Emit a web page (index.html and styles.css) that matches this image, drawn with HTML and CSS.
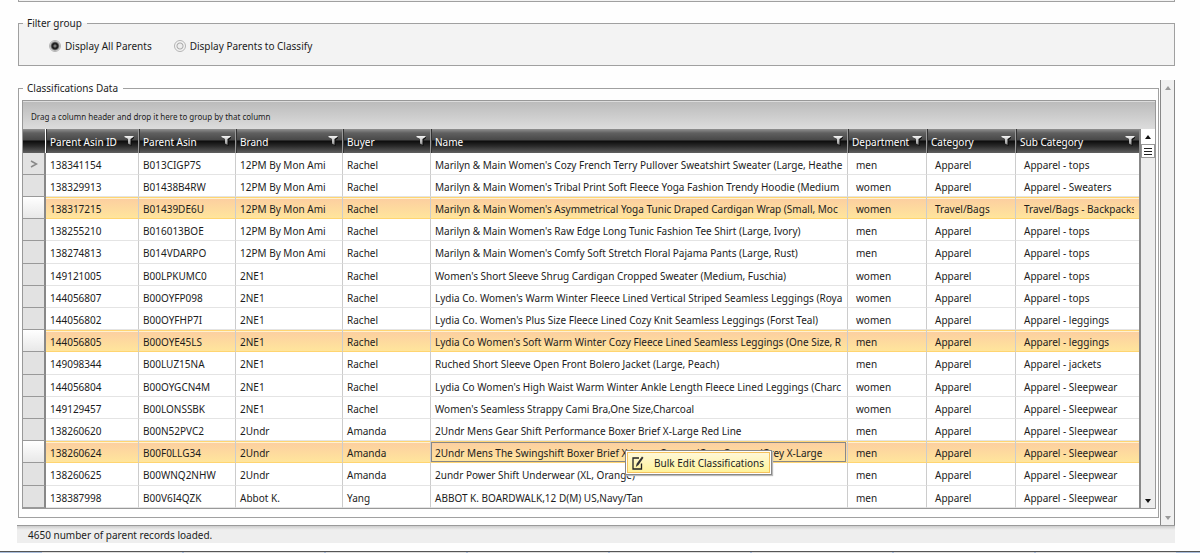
FILE: index.html
```
<!DOCTYPE html>
<html lang="en">
<head>
<meta charset="utf-8">
<title>Classifications</title>
<link rel="stylesheet" href="styles.css">
</head>
<body>
<svg class="defs" aria-hidden="true">
  <defs>
    <linearGradient id="funnel-fill" x1="0" y1="0" x2="0" y2="1">
      <stop offset="0" stop-color="#f4f4f4"/>
      <stop offset="1" stop-color="#909090"/>
    </linearGradient>
    <symbol id="funnel" viewBox="0 0 10 11">
      <path d="M2 2h8v1L7.500 5v6L5 9.500V5L2 3z" fill="#0a0a0a"/>
      <path d="M.5 1h9v1L6.500 4v6L4 8.500V4L.5 2z" fill="url(#funnel-fill)"/>
    </symbol>
  </defs>
</svg>
<div class="page">
  <div class="previous-group"></div>
  <fieldset class="group filter-group">
    <legend>Filter group</legend>
    <div class="options">
      <label class="option"><input type="radio" name="display" checked>Display All Parents</label>
      <label class="option"><input type="radio" name="display">Display Parents to Classify</label>
    </div>
  </fieldset>
  <main class="workspace">
    <fieldset class="group data-group">
      <legend>Classifications Data</legend>
      <div class="grid">
        <div class="group-bar">Drag a column header and drop it here to group by that column</div>
        <div class="grid-body">
          <table class="records">
            <colgroup>
              <col class="c-handle"><col class="c-id"><col class="c-asin"><col class="c-brand"><col class="c-buyer"><col><col class="c-dept"><col class="c-cat"><col class="c-sub">
            </colgroup>
            <thead>
              <tr id="head"></tr>
            </thead>
            <tbody id="rows"></tbody>
          </table>
          <div class="scroll inner-scroll">
            <button class="arrow up" type="button" aria-label="Scroll up"></button>
            <div class="thumb"></div>
            <button class="arrow down" type="button" aria-label="Scroll down"></button>
          </div>
        </div>
        <div class="menu" role="menu">
          <button class="menu-item" type="button" role="menuitem">
            <svg class="edit-icon" viewBox="0 0 12 14" aria-hidden="true">
              <path d="M7 2H1v11h8.500V7.500" fill="none" stroke="#222" stroke-width="1.300"/>
              <path d="M10 .5l1.500 1.200-5 7.300-2.700 2 .8-3.200z" fill="#333"/>
            </svg>
            <span>Bulk Edit Classifications</span>
          </button>
        </div>
      </div>
    </fieldset>
    <div class="scroll outer-scroll">
      <button class="arrow up" type="button" aria-label="Scroll page up"></button>
      <button class="arrow down" type="button" aria-label="Scroll page down"></button>
    </div>
  </main>
  <footer class="status">4650 number of parent records loaded.</footer>
</div>
<div class="taskbar"><i></i><i></i><i></i><i></i><i></i><i></i><i></i><i></i></div>
<script src="grid.js"></script>
</body>
</html>
```
FILE: grid.js
```
const columns = ["Parent Asin ID", "Parent Asin", "Brand", "Buyer", "Name", "Department", "Category", "Sub Category"];
const records = [
  ["138341154", "B013CIGP7S", "12PM By Mon Ami", "Rachel", "Marilyn & Main Women's Cozy French Terry Pullover Sweatshirt Sweater (Large, Heathe", "men", "Apparel", "Apparel - tops"],
  ["138329913", "B01438B4RW", "12PM By Mon Ami", "Rachel", "Marilyn & Main Women's Tribal Print Soft Fleece Yoga Fashion Trendy Hoodie (Medium", "women", "Apparel", "Apparel - Sweaters"],
  ["138317215", "B01439DE6U", "12PM By Mon Ami", "Rachel", "Marilyn & Main Women's Asymmetrical Yoga Tunic Draped Cardigan Wrap (Small, Moc", "women", "Travel/Bags", "Travel/Bags - Backpacks"],
  ["138255210", "B016013BOE", "12PM By Mon Ami", "Rachel", "Marilyn & Main Women's Raw Edge Long Tunic Fashion Tee Shirt (Large, Ivory)", "men", "Apparel", "Apparel - tops"],
  ["138274813", "B014VDARPO", "12PM By Mon Ami", "Rachel", "Marilyn & Main Women's Comfy Soft Stretch Floral Pajama Pants (Large, Rust)", "men", "Apparel", "Apparel - tops"],
  ["149121005", "B00LPKUMC0", "2NE1", "Rachel", "Women's Short Sleeve Shrug Cardigan Cropped Sweater (Medium, Fuschia)", "women", "Apparel", "Apparel - tops"],
  ["144056807", "B00OYFP098", "2NE1", "Rachel", "Lydia Co. Women's Warm Winter Fleece Lined Vertical Striped Seamless Leggings (Roya", "women", "Apparel", "Apparel - tops"],
  ["144056802", "B00OYFHP7I", "2NE1", "Rachel", "Lydia Co. Women's Plus Size Fleece Lined Cozy Knit Seamless Leggings (Forst Teal)", "women", "Apparel", "Apparel - leggings"],
  ["144056805", "B00OYE45LS", "2NE1", "Rachel", "Lydia Co Women's Soft Warm Winter Cozy Fleece Lined Seamless Leggings (One Size, R", "men", "Apparel", "Apparel - leggings"],
  ["149098344", "B00LUZ15NA", "2NE1", "Rachel", "Ruched Short Sleeve Open Front Bolero Jacket (Large, Peach)", "men", "Apparel", "Apparel - jackets"],
  ["144056804", "B00OYGCN4M", "2NE1", "Rachel", "Lydia Co Women's High Waist Warm Winter Ankle Length Fleece Lined Leggings (Charc", "women", "Apparel", "Apparel - Sleepwear"],
  ["149129457", "B00LONSSBK", "2NE1", "Rachel", "Women's Seamless Strappy Cami Bra,One Size,Charcoal", "women", "Apparel", "Apparel - Sleepwear"],
  ["138260620", "B00N52PVC2", "2Undr", "Amanda", "2Undr Mens Gear Shift Performance Boxer Brief X-Large Red Line", "men", "Apparel", "Apparel - Sleepwear"],
  ["138260624", "B00F0LLG34", "2Undr", "Amanda", "2Undr Mens The Swingshift Boxer Brief X-Large Orange/Grey Orange/Grey X-Large", "men", "Apparel", "Apparel - Sleepwear"],
  ["138260625", "B00WNQ2NHW", "2Undr", "Amanda", "2undr Power Shift Underwear (XL, Orange)", "men", "Apparel", "Apparel - Sleepwear"],
  ["138387998", "B00V6I4QZK", "Abbot K.", "Yang", "ABBOT K. BOARDWALK,12 D(M) US,Navy/Tan", "men", "Apparel", "Apparel - Sleepwear"]
];
const selected = new Set(["138317215", "144056805", "138260624"]);
const focused = "138260624";

const head = document.getElementById("head");
const corner = document.createElement("th");
corner.className = "handle";
head.append(corner);
for (const title of columns) {
  const th = document.createElement("th");
  th.scope = "col";
  th.innerHTML = '<div class="heading"><span></span><button class="filter" type="button"><svg><use href="#funnel"/></svg></button></div>';
  th.querySelector("span").textContent = title;
  th.querySelector("button").setAttribute("aria-label", "Filter " + title);
  head.append(th);
}

const body = document.getElementById("rows");
records.forEach((record, index) => {
  const tr = document.createElement("tr");
  if (selected.has(record[0])) tr.className = "selected";
  const handle = document.createElement("td");
  handle.className = "handle";
  if (index === 0) handle.innerHTML = '<svg class="current" viewBox="0 0 8 8"><path d="M1 1l5.500 3L1 7" fill="none" stroke="#888" stroke-width="1.500"/></svg>';
  tr.append(handle);
  record.forEach((value, column) => {
    const td = document.createElement("td");
    const cell = document.createElement("div");
    cell.className = "cell";
    if (record[0] === focused && column === 4) td.className = "focused";
    cell.textContent = value;
    td.append(cell);
    tr.append(td);
  });
  body.append(tr);
});
```
FILE: styles.css
```
* { box-sizing: border-box; }
body {
  margin: 0;
  background: #fefefe;
  color: #1c1c1c;
  font: 10px/14px "Noto Sans", "Open Sans", sans-serif;
}
button {
  margin: 0;
  padding: 0;
  border: 0;
  background: none;
  color: inherit;
  font: inherit;
}
.defs { position: absolute; width: 0; height: 0; }
.page { padding: 0 25px 0 17px; }
.previous-group {
  height: 2px;
  margin: 0 0 14px 1px;
  border: 1px solid #a0a0a0;
  border-top: 0;
  background: #f3f3f3;
}
.group {
  min-width: 0;
  margin: 0;
  border: 1px solid #a0a0a0;
}
.group legend { margin-left: 1px; padding: 0 5px 0 4px; }
.filter-group {
  margin-left: 1px;
  padding: 9px 3px 12px;
  background: #f3f3f3;
}
.options { display: flex; gap: 22px; padding-left: 27px; }
.option { display: flex; align-items: center; gap: 4px; }
.option input {
  appearance: none;
  width: 12px;
  height: 12px;
  margin: 0;
  border: 1px solid #b4b4b4;
  border-radius: 50%;
  background: radial-gradient(circle, #eee 0 2px, #aaa 3px, #f4f4f4 4px);
}
.option input:checked { background: radial-gradient(circle, #777 0 1px, #222 2px 3px, #ddd 5px); }

.workspace { display: flex; }
.data-group { flex: 1; margin: 15px 0 7px 1px; padding: 5px 2px 8px 3px; }
.grid { position: relative; border: 1px solid #999; }
.group-bar {
  padding: 8px 8px 5px;
  border-top: 1px solid #ddd;
  background: linear-gradient(#bcbcbc, #dcdcdc);
  font-size: 8px;
}
.grid-body { display: flex; }
.records {
  flex: 1;
  width: 0;
  border-spacing: 0;
  table-layout: fixed;
}
.c-handle { width: 23px; }
.c-id { width: 92px; }
.c-asin { width: 97px; }
.c-brand { width: 107px; }
.c-buyer { width: 88px; }
.c-dept { width: 79px; }
.c-cat { width: 89px; }
.c-sub { width: 124px; }
.records th, .records td { padding: 0; text-align: left; font-weight: 400; }
.records th {
  height: 24px;
  border-left: 1px solid #999;
  background: linear-gradient(#909090, #606060 4px, #484848 11px, #0c0c0c 12px, #2a2a2a 17px, #606060 24px);
  box-shadow: inset 1px 0 #333;
  color: #fff;
}
.records th.handle { border-left: 0; box-shadow: none; border-right: 1px solid #fff; }
.heading { display: flex; align-items: center; justify-content: space-between; padding: 2px 4px 0 4px; }
.heading span { white-space: nowrap; }
.filter { display: flex; margin-bottom: 4px; }
.filter svg { width: 10px; height: 11px; }
.records tbody tr { height: 22px; }
.records tbody tr:nth-child(5n) { height: 23px; }
.records td { border-left: 1px solid #ccc; border-bottom: 1px solid #e4e4e4; background: #fff; }
.cell { margin-right: 1px; padding: 2px 0 0 4px; overflow: hidden; white-space: nowrap; }
td:nth-child(n+7) .cell { padding-left: 8px; }
td:last-child .cell { margin-right: 5px; }
.records td.handle {
  border-left: 0;
  border-right: 2px solid #888;
  border-bottom: 1px solid #999;
  background: #e2e2e2;
}
.current { display: block; width: 8px; height: 8px; margin: 0 auto; }
.records td:nth-child(2), .records th:nth-child(2) { border-left: 0; }
.records .selected td:not(.handle) {
  border-bottom-color: #ffd571;
  background: linear-gradient(#ffd571 1px, #fff1d0 1px 2px, #fccfa0 2px, #ffe59c);
}
.records .selected td.handle { background: linear-gradient(#fff, #e8e8e8); }
.records .focused { outline: 1px solid #888; outline-offset: -2px; }

.scroll {
  display: flex;
  flex-direction: column;
  background: #ededed;
  border: 1px solid #aaa;
}
.inner-scroll { width: 16px; border-width: 0 0 0 2px; border-color: #888; }
.outer-scroll { width: 15px; margin: 14px 0 0 1px; border-width: 0 1px; border-color: #888; background: #f0f0f0; }
.arrow { display: flex; align-items: center; justify-content: center; height: 15px; }
.arrow::before { content: ""; border: 3px solid transparent; }
.up::before { border-bottom: 4px solid #111; border-top: 0; }
.down::before { border-top: 4px solid #111; border-bottom: 0; }
.down { margin-top: auto; }
.outer-scroll .up::before { border-bottom-color: #999; }
.outer-scroll .down::before { border-top-color: #999; }
.inner-scroll .up { background: #fff; }
.thumb {
  height: 14px;
  border: 1px solid #999;
  background: repeating-linear-gradient(#222 0 1px, #fff 1px 3px) center / 8px 7px no-repeat, #fff;
}

.menu {
  position: absolute;
  top: 349px;
  left: 602px;
  padding: 1px;
  border: 1px solid #888;
  background: #fff;
  box-shadow: 1px 1px 1px #bbb;
}
.menu-item {
  display: flex;
  align-items: center;
  gap: 10px;
  padding: 3px 5px 2px 4px;
  border: 1px solid #f5c25c;
  background: linear-gradient(#fff8d8, #fff39a);
}
.edit-icon { width: 12px; height: 14px; }

.status {
  padding: 2px 11px 1px;
  border-top: 1px solid #999;
  background: linear-gradient(#ccc, #eee 4px);
}
.taskbar {
  display: flex;
  gap: 2px;
  height: 2px;
  margin-top: 8px;
  padding: 0 24px 0 42px;
  border-top: 1px solid #555;
  background: #a9bddb;
}
.taskbar i { flex: 1; background: #ddd; }
```
